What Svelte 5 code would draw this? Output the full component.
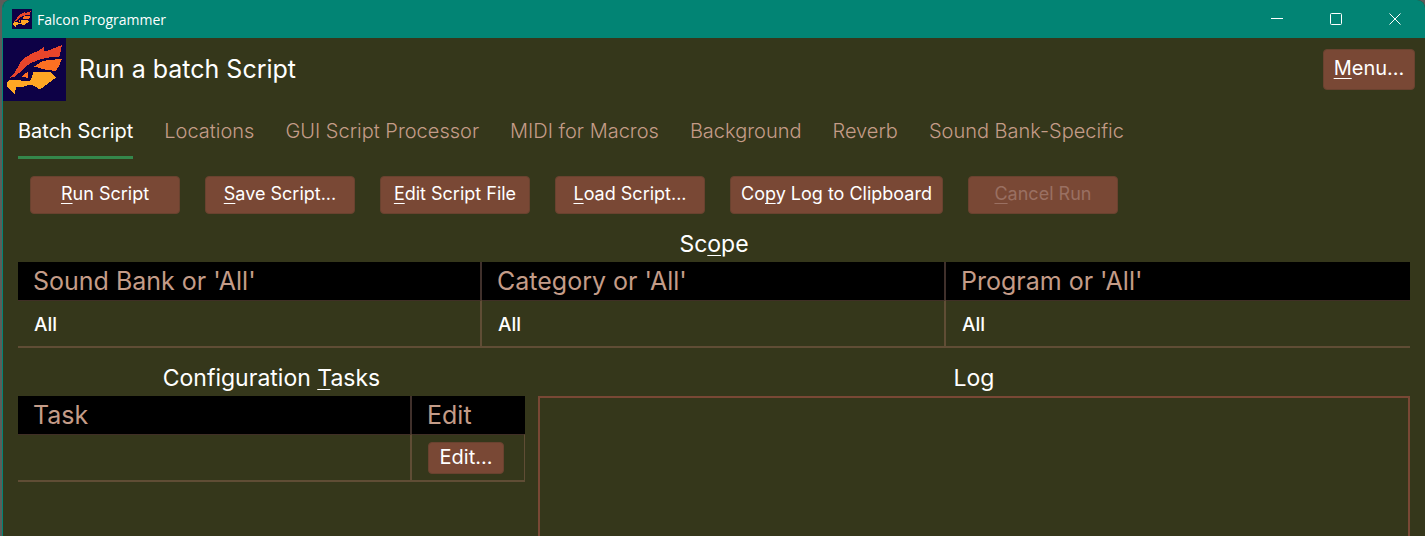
<script>
  const tabs = [
    'Batch Script',
    'Locations',
    'GUI Script Processor',
    'MIDI for Macros',
    'Background',
    'Reverb',
    'Sound Bank-Specific'
  ];
  let active = $state(0);

  // Each label is split around its underlined access key.
  const actions = [
    { before: '', key: 'R', after: 'un Script' },
    { before: '', key: 'S', after: 'ave Script...' },
    { before: '', key: 'E', after: 'dit Script File' },
    { before: '', key: 'L', after: 'oad Script...' },
    { before: 'Co', key: 'p', after: 'y Log to Clipboard' },
    { before: '', key: 'C', after: 'ancel Run', disabled: true }
  ];

  const scopeColumns = ["Sound Bank or 'All'", "Category or 'All'", "Program or 'All'"];
  const scopeRows = [['All', 'All', 'All']];
</script>

{#snippet falcon()}
  <svg class="falcon" viewBox="0 0 63 63" aria-hidden="true" shape-rendering="crispEdges">
    <rect width="63" height="63" fill="#0d0146" />
    <path fill="#e8452b" d="M7.500 39.500 L12 34 L16 27 L18 23 L23 19 L30 15 L35 13 L38 11 L40.500 9.300 L41 13 L45 12.500 L59 7 L57.500 14 L56.500 18.500 L48 19 L38 21 L29 24.500 L22 29 L16 35 L12 38.500 Z" />
    <path fill="#fd7022" d="M31 28.500 L39 23.500 L45 22 L59 21 L56 28 L53 33 L42 31.500 Z" />
    <path fill="#fd7022" d="M19 38.500 L23.500 34.500 L25 34 L24.500 40 Z" />
    <path fill="#ffa724" d="M4 44 L7.500 41.500 L16 42 L20 43 L27 43 L28.500 40 L30.500 33.500 L41 34 L48 34 L53 39.500 L45 45.500 L37 51.500 L32 48.500 L28 46.500 L19 49 L13 49 L12 56 L7 52 L4 48 Z" />
  </svg>
{/snippet}

<div class="window">
  <header class="titlebar">
    <div class="app-icon">{@render falcon()}</div>
    <span class="app-name">Falcon Programmer</span>
    <button class="caption" aria-label="Minimize">
      <svg viewBox="0 0 12 12"><path d="M0 5.500H12" /></svg>
    </button>
    <button class="caption" aria-label="Maximize">
      <svg viewBox="0 0 12 12"><rect x=".5" y=".5" width="11" height="11" rx="1" /></svg>
    </button>
    <button class="caption" aria-label="Close">
      <svg viewBox="0 0 12 12"><path d="M.5 .5L11.500 11.500M11.500 .5L.5 11.500" /></svg>
    </button>
  </header>

  <div class="page-head">
    <div class="logo">{@render falcon()}</div>
    <h1>Run a batch Script</h1>
    <button class="btn menu"><span><u>M</u>enu...</span></button>
  </div>

  <div class="tabs" role="tablist">
    {#each tabs as tab, i}
      <button role="tab" class="tab" class:active={active === i} aria-selected={active === i} onclick={() => (active = i)}>{tab}</button>
    {/each}
  </div>

  <main>
    <div class="actions">
      {#each actions as a}
        <button class="btn action" disabled={a.disabled}><span>{a.before}<u>{a.key}</u>{a.after}</span></button>
      {/each}
    </div>

    <section>
      <h2 id="scope">Sc<u>o</u>pe</h2>
      <table aria-labelledby="scope">
        <thead>
          <tr>{#each scopeColumns as c}<th>{c}</th>{/each}</tr>
        </thead>
        <tbody>
          {#each scopeRows as row}
            <tr>{#each row as cell}<td>{cell}</td>{/each}</tr>
          {/each}
        </tbody>
      </table>
    </section>

    <div class="lower">
      <section>
        <h2 id="tasks">Configuration <u>T</u>asks</h2>
        <table class="tasks" aria-labelledby="tasks">
          <thead>
            <tr><th>Task</th><th class="edit">Edit</th></tr>
          </thead>
          <tbody>
            <tr><td></td><td class="edit"><button class="btn small"><span>Edit...</span></button></td></tr>
          </tbody>
        </table>
      </section>
      <section class="log">
        <h2><label for="log">Log</label></h2>
        <textarea id="log" readonly></textarea>
      </section>
    </div>
  </main>
</div>

<style>
  :global(body) {
    margin: 0;
    background: #5c5c5a;
  }
  .window {
    box-sizing: border-box;
    height: 100vh;
    margin-left: 2px;
    border-left: 1px solid #028474;
    border-radius: 8px 8px 0 0;
    background: #35371b;
    color: #fff;
    font-family: Inter, sans-serif;
    display: flex;
    flex-direction: column;
    overflow: hidden;
  }
  button {
    font: inherit;
    color: inherit;
    border: 0;
    padding: 0;
    background: none;
  }
  u {
    text-decoration-thickness: 1px;
    text-underline-offset: 3px;
    text-decoration-skip-ink: none;
  }
  .falcon {
    display: block;
    width: 100%;
    height: 100%;
  }

  .titlebar {
    display: flex;
    flex: none;
    align-items: center;
    height: 38px;
    padding: 0 1px 0 9px;
    background: #028474;
    font: 14px "Open Sans", sans-serif;
  }
  .app-icon {
    width: 20px;
    height: 20px;
  }
  .app-name {
    flex: 1;
    margin-left: 5px;
  }
  .caption {
    display: grid;
    place-items: center;
    width: 59px;
    height: 38px;
  }
  .caption svg {
    width: 12px;
    height: 12px;
    fill: none;
    stroke: #fff;
  }

  .page-head {
    display: flex;
    flex: none;
    align-items: center;
    padding-right: 10px;
  }
  .logo {
    width: 63px;
    height: 63px;
  }
  h1 {
    flex: 1;
    margin: 0 0 2px 13px;
    font-size: 25px;
    line-height: 32px;
    font-weight: 400;
  }

  .btn {
    box-sizing: border-box;
    display: inline-grid;
    place-items: center;
    background: #794835;
    border: 1px solid #69422f;
    border-radius: 4px;
    font-weight: 400;
  }
  .menu {
    width: 92px;
    height: 41px;
    font-size: 20px;
    padding-bottom: 3px;
  }
  .action {
    min-width: 150px;
    height: 38px;
    padding: 0 10px 3px;
    font-size: 18px;
  }
  .action:disabled {
    color: #9a7062;
  }
  .small {
    width: 76px;
    height: 32px;
    padding-bottom: 2px;
    font-size: 20px;
  }

  .tabs {
    display: flex;
    flex: none;
    gap: 31px;
    padding: 14px 15px 0;
  }
  .tab {
    height: 44px;
    padding-bottom: 10px;
    border-bottom: 3px solid transparent;
    color: #c49c88;
    font-size: 20px;
    font-weight: 300;
    white-space: nowrap;
  }
  .tab.active {
    color: #fff;
    border-color: #34874b;
    font-weight: 400;
  }

  main {
    display: flex;
    flex: 1;
    flex-direction: column;
    min-height: 0;
    padding: 17px 15px 0;
  }
  .actions {
    display: flex;
    gap: 25px;
    padding: 0 12px 13px;
  }
  h2 {
    margin: 0;
    padding-bottom: 1px;
    font-size: 23px;
    line-height: 34px;
    font-weight: 400;
    text-align: center;
  }
  table {
    width: 100%;
    table-layout: fixed;
    border-collapse: separate;
    border-spacing: 0;
  }
  th {
    box-sizing: border-box;
    height: 38px;
    padding: 0 15px;
    background: #000;
    color: #c49c88;
    font-size: 25px;
    line-height: 30px;
    font-weight: 400;
    text-align: left;
    border-right: 2px solid #40302b;
  }
  td {
    box-sizing: border-box;
    height: 48px;
    padding: 1px 16px 0;
    border-right: 2px solid #604d35;
    border-bottom: 2px solid #604d35;
    border-top: 1px solid #402f26;
    font-size: 19px;
    font-weight: 500;
  }
  th:last-child,
  td:last-child {
    border-right: 0;
  }
  .tasks .edit {
    width: 113px;
  }
  .tasks td:last-child {
    border-right: 1px solid #604d35;
  }

  .lower {
    display: grid;
    grid-template-columns: 507fr 872fr;
    gap: 13px;
    flex: 1;
    min-height: 0;
    padding-top: 13px;
  }
  .log {
    display: flex;
    flex-direction: column;
  }
  textarea {
    box-sizing: border-box;
    flex: 1;
    width: 100%;
    margin: 0;
    padding: 8px;
    border: 2px solid #794835;
    border-bottom: 0;
    background: transparent;
    color: #fff;
    font: 18px Inter, sans-serif;
    resize: none;
    outline: 0;
  }
</style>
